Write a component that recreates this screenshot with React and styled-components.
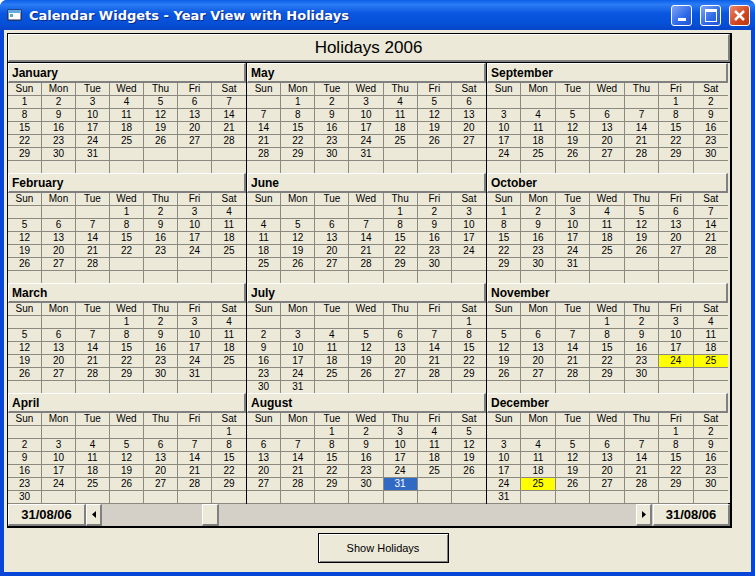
import styled, { createGlobalStyle } from 'styled-components';

const Global = createGlobalStyle`
  body { margin: 0; font-family: "Liberation Sans", Arial, sans-serif; }
`;

const Window = styled.div`
  width: 755px; height: 576px; box-sizing: border-box;
  background: #0846d8; border-radius: 7px 7px 0 0;
  display: flex; flex-direction: column; overflow: hidden;
`;
const TitleBar = styled.div`
  height: 30px; display: flex; align-items: center; gap: 6px; padding: 0 5px 0 7px;
  background: linear-gradient(#0a5fe8, #2b7cf4 15%, #0a56e0 45%, #0650d6 80%, #0844c8);
  color: #fff; font: bold 13px "DejaVu Sans", sans-serif;
  text-shadow: 1px 1px #0a2a8a;
`;
const TitleText = styled.span` flex: 1; `;
const TitleBtn = styled.div`
  width: 21px; height: 21px; border: 1px solid #fff; border-radius: 3px; box-sizing: border-box;
  background: ${p => p.close ? 'linear-gradient(135deg,#e8876a,#d2451e 60%,#b8380f)' : 'linear-gradient(135deg,#7ea6f5,#2d68e8 60%,#2155d2)'};
  display: flex; align-items: center; justify-content: center; margin-left: 2px;
`;
const Client = styled.div`
  flex: 1; margin: 0 4px 4px; background: #ece9d8; padding: 3px 3px 0;
  display: flex; flex-direction: column; align-items: flex-start;
`;
const Panel = styled.div`
  width: 722px; border: 1px solid #000; border-right: 2px solid #000; border-bottom: 2px solid #000;
  background: #ece9d8; box-sizing: content-box;
`;
const Raised = styled.div`
  background: #ece9d8; box-sizing: border-box;
  border-top: 1px solid #fff; border-left: 1px solid #fff;
  border-right: 2px solid #808080; border-bottom: 2px solid #808080;
`;
const Heading = styled(Raised)`
  height: 28px; display: flex; align-items: center; justify-content: center;
  font-size: 17px;
`;
const Grid = styled.div`
  display: grid; grid-template-columns: 239px 240px 241px; border-top: 1px solid #000;
`;
const Month = styled.div`
  height: 110px; border-right: ${p => p.last ? 'none' : '1px solid #000'};
`;
const MonthHead = styled.div`
  height: 20px; box-sizing: border-box; display: flex; align-items: center; padding-left: 3px;
  font-weight: bold; font-size: 12px;
  border-top: 1px solid #fff; border-left: 1px solid #fff;
  border-right: 2px solid #808080; border-bottom: 2px solid #808080;
`;
const Days = styled.div`
  display: grid; grid-template-columns: repeat(7, 1fr);
`;
const Cell = styled.div`
  height: 13px; box-sizing: border-box; font-size: 10px; line-height: 12px; text-align: center;
  border-right: ${p => p.edge ? 'none' : '1px solid #8c8a80'};
  border-bottom: 1px solid #8c8a80;
  background: ${p => p.hl === 'y' ? '#ffff00' : p.hl === 'b' ? '#316ac5' : 'transparent'};
  color: ${p => p.hl === 'b' ? '#fff' : '#000'};
`;
const Bottom = styled.div`
  display: flex; height: 22px; border-top: 1px solid #000;
`;
const DateBox = styled(Raised)`
  width: ${p => p.w}px; display: flex; align-items: center; justify-content: center;
  font-weight: bold; font-size: 13px;
`;
const Scroll = styled.div`
  flex: 1; display: flex; background: #d4d0c8;
`;
const ScrollBtn = styled(Raised)`
  width: ${p => p.w}px; display: flex; align-items: center; justify-content: center;
`;
const Gap = styled.div` width: ${p => p.w}px; `;
const Footer = styled.div`
  flex: 1; align-self: stretch; display: flex; justify-content: center; padding-top: 5px; padding-left: 11px;
`;
const Button = styled.button`
  width: 131px; height: 30px; background: #ece9d8; font: 11px "Liberation Sans", sans-serif;
  border: 1px solid #000; box-shadow: inset 1px 1px #fff, inset -1px -1px #808080, inset 2px 2px #ece9d8;
`;

const names = ['January','February','March','April','May','June','July','August','September','October','November','December'];
const dn = ['Sun','Mon','Tue','Wed','Thu','Fri','Sat'];
const hl = { '10-24': 'y', '10-25': 'y', '11-25': 'y', '7-31': 'b' };

function MonthBlock({ m, last }) {
  const start = new Date(2006, m, 1).getDay();
  const len = new Date(2006, m + 1, 0).getDate();
  const cells = Array.from({ length: 42 }, (_, i) => { const d = i - start + 1; return d >= 1 && d <= len ? d : ''; });
  return (
    <Month last={last}>
      <MonthHead>{names[m]}</MonthHead>
      <Days>
        {dn.map((d, i) => <Cell key={d} edge={i === 6}>{d}</Cell>)}
        {cells.map((d, i) => <Cell key={i} edge={i % 7 === 6} hl={d && hl[`${m}-${d}`]}>{d}</Cell>)}
      </Days>
    </Month>
  );
}

export default function App() {
  return (
    <Window>
      <Global />
      <TitleBar>
        <svg width="16" height="14" viewBox="0 0 16 14"><rect x="1" y="2" width="13" height="10" fill="#fff" stroke="#223" /><rect x="1" y="2" width="13" height="3" fill="#6ad" /><rect x="3" y="6" width="3" height="3" fill="#5ab" /></svg>
        <TitleText>Calendar Widgets - Year View with Holidays</TitleText>
        <TitleBtn><div style={{ width: 8, height: 3, background: '#fff', marginTop: 9 }} /></TitleBtn>
        <TitleBtn><div style={{ width: 10, height: 9, border: '1px solid #fff', borderTopWidth: 3 }} /></TitleBtn>
        <TitleBtn close><svg width="11" height="11"><path d="M1 1L10 10M10 1L1 10" stroke="#fff" strokeWidth="2.5" /></svg></TitleBtn>
      </TitleBar>
      <Client>
        <Panel>
          <Heading>Holidays 2006</Heading>
          <Grid>
            {[0, 1, 2, 3].map(r => [0, 4, 8].map(c => <MonthBlock key={r + c} m={r + c} last={c === 8} />))}
          </Grid>
          <Bottom>
            <DateBox w={78}>31/08/06</DateBox>
            <Scroll>
              <ScrollBtn w={16}><svg width="4" height="7"><path d="M4 0V7L0 3.5Z" /></svg></ScrollBtn>
              <Gap w={100} />
              <ScrollBtn w={17} />
              <Gap w={417} />
              <ScrollBtn w={16}><svg width="4" height="7"><path d="M0 0V7L4 3.5Z" /></svg></ScrollBtn>
            </Scroll>
            <DateBox w={77}>31/08/06</DateBox>
          </Bottom>
        </Panel>
        <Footer><Button>Show Holidays</Button></Footer>
      </Client>
    </Window>
  );
}
